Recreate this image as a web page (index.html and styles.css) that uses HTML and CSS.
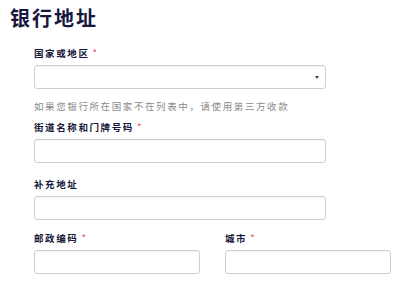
FILE: index.html
```html
<!DOCTYPE html>
<html lang="zh">
<head>
<meta charset="utf-8">
<link rel="stylesheet" href="styles.css">
</head>
<body>
<div class="page">
  <h1 class="title">银行地址</h1>
  <div class="form">
    <div class="field">
      <label class="label">国家或地区<span class="req">*</span></label>
      <div class="box select"><span class="arrow"></span></div>
      <p class="help">如果您银行所在国家不在列表中，请使用第三方收款</p>
    </div>
    <div class="field">
      <label class="label">街道名称和门牌号码<span class="req">*</span></label>
      <div class="box street"></div>
    </div>
    <div class="field">
      <label class="label">补充地址</label>
      <div class="box extra"></div>
    </div>
    <div class="row">
      <div class="field col">
        <label class="label">邮政编码<span class="req">*</span></label>
        <div class="box"></div>
      </div>
      <div class="field col">
        <label class="label">城市<span class="req">*</span></label>
        <div class="box"></div>
      </div>
    </div>
  </div>
</div>
</body>
</html>
```
FILE: styles.css
```css
html, body { margin: 0; padding: 0; background: #fff; }
body { font-family: "Noto Sans CJK SC", "Noto Sans", sans-serif; }
.page { padding: 6px 0 0 10px; }
.title {
  margin: 0;
  font-size: 20px;
  line-height: 24px;
  letter-spacing: 2px;
  font-weight: 700;
  color: #16163e;
}
.form { padding: 17px 0 0 24px; }
.field { display: flex; flex-direction: column; }
.label {
  font-size: 9.5px;
  line-height: 12px;
  letter-spacing: 1.6px;
  font-weight: 700;
  color: #17173a;
  margin-bottom: 6px;
}
.req { color: #e8475a; font-weight: 400; margin-left: 3px; }
.box {
  width: 290px;
  height: 22px;
  border: 1px solid #cfcfcf;
  border-radius: 3px;
  box-shadow: inset 0 1px 1px rgba(0,0,0,0.04);
  background: #fff;
  position: relative;
}
.select { margin-bottom: 11px; }
.street { margin-bottom: 15px; }
.extra { margin-bottom: 12px; }
.arrow {
  position: absolute;
  right: 6px;
  top: 10px;
  width: 0; height: 0;
  border-left: 2px solid transparent;
  border-right: 2px solid transparent;
  border-top: 3px solid #444;
}
.help {
  margin: 0 0 9px 0;
  font-size: 9.5px;
  line-height: 12px;
  letter-spacing: 1.6px;
  color: #8a8a8a;
}
.row { display: flex; gap: 25px; }
.col .box { width: 164px; }
```
